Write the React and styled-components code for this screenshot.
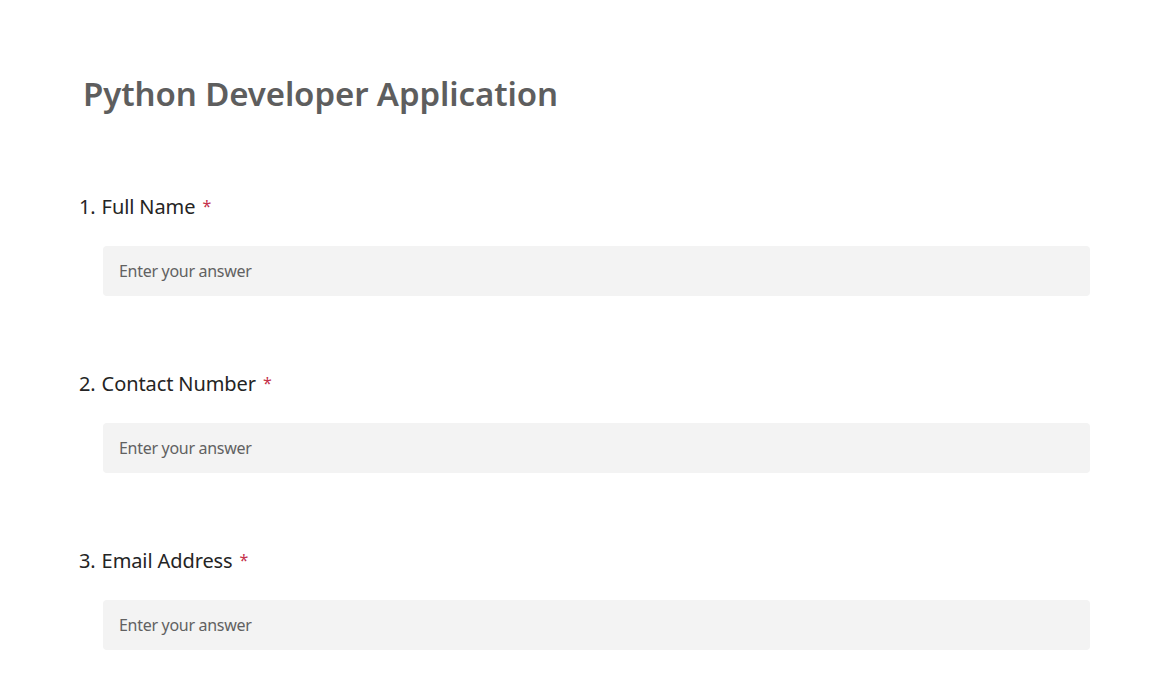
import React from 'react'
import styled, { createGlobalStyle } from 'styled-components'

const Global = createGlobalStyle`
  body {
    margin: 0;
    background: #ffffff;
    font-family: "Noto Sans", "Open Sans", sans-serif;
  }
`

const questions = [
  { no: 1, label: 'Full Name' },
  { no: 2, label: 'Contact Number' },
  { no: 3, label: 'Email Address' },
]

export default function App() {
  return (
    <Page>
      <Global />
      <Title>Python Developer Application</Title>
      <List>
        {questions.map(q => (
          <Question key={q.no}>
            <Label>
              <Num>{q.no}.</Num>
              {q.label}
              <Req>*</Req>
            </Label>
            <Answer placeholder="Enter your answer" />
          </Question>
        ))}
      </List>
    </Page>
  )
}

const Page = styled.div`
  width: 1161px;
  height: 678px;
  overflow: hidden;
  padding: 72px 0 0 79px;
  box-sizing: border-box;
`

const Title = styled.h1`
  margin: 0 0 0 4px;
  font-size: 33px;
  font-weight: 600;
  color: #5e5e5e;
  line-height: 44px;
  letter-spacing: -0.1px;
`

const List = styled.div`
  display: flex;
  flex-direction: column;
  gap: 74px;
  margin-top: 77px;
`

const Question = styled.div`
  display: flex;
  flex-direction: column;
  gap: 25px;
`

const Label = styled.div`
  height: 28px;
  font-size: 20px;
  line-height: 28px;
  color: #242424;
  letter-spacing: -0.1px;
`

const Num = styled.span`
  margin-right: 6px;
`

const Req = styled.span`
  color: #c4314b;
  margin-left: 7px;
  font-size: 16px;
  line-height: 0;
  vertical-align: 2px;
`

const Answer = styled.input`
  margin-left: 24px;
  width: 987px;
  height: 50px;
  box-sizing: border-box;
  border: none;
  outline: none;
  border-radius: 4px;
  background: #f3f3f3;
  padding: 0 16px;
  font-family: inherit;
  font-size: 16px;
  letter-spacing: -0.3px;
  color: #242424;

  &::placeholder {
    color: #616161;
  }
`
